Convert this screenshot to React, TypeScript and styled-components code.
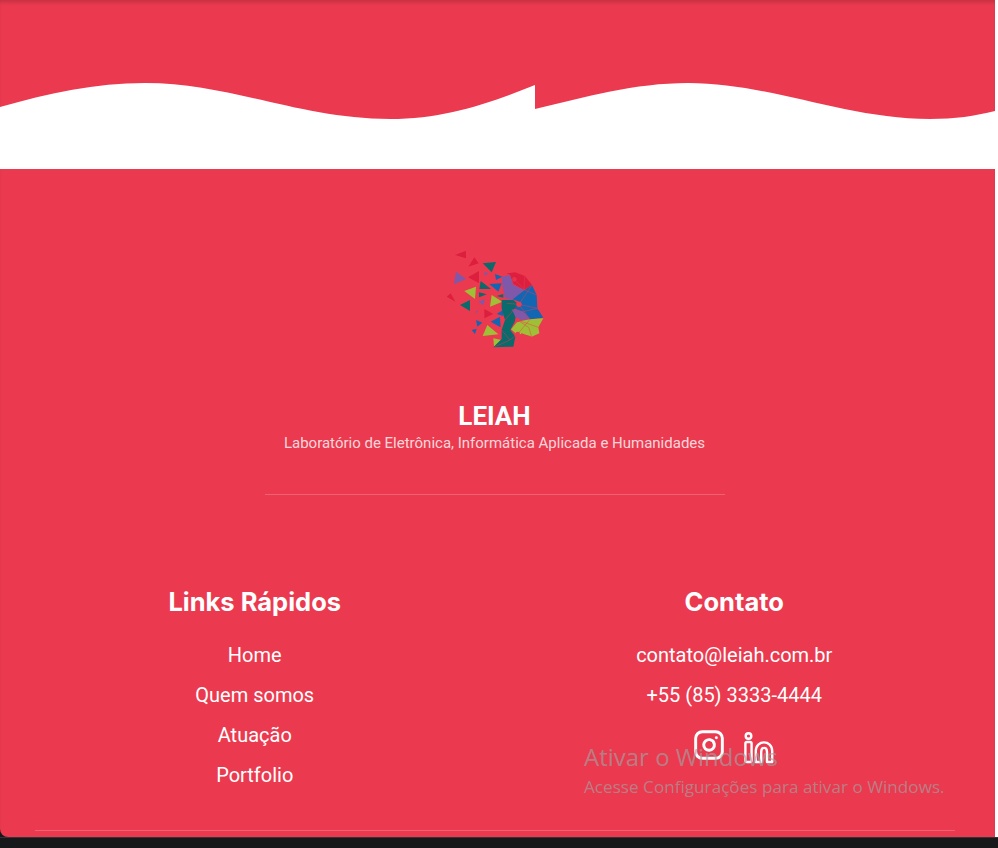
import React from "react";
import styled, { createGlobalStyle } from "styled-components";
import { Instagram } from "lucide-react";

const GlobalStyle = createGlobalStyle`
  html, body {
    margin: 0;
    padding: 0;
    height: 100%;
    overflow: hidden;
    background: #fff;
  }
  * { box-sizing: border-box; }
`;

const RED = "#eb3a4f";

const Page = styled.div`
  position: relative;
  width: 998px;
  height: 848px;
  display: flex;
  flex-direction: column;
  background: linear-gradient(#17181a, #17181a) left bottom / 20px 30px no-repeat, #fff;
  font-family: Roboto, "Liberation Sans", sans-serif;
  color: #fff;
`;

const Main = styled.main`
  width: 995px;
  height: 837px;
  background: ${RED};
  border-bottom-left-radius: 8px;
  box-shadow: inset 0 4px 4px -2px rgba(0, 0, 0, 0.18);
  overflow: hidden;
`;

const BottomBar = styled.div`
  height: 11px;
  background: #17181a;
  border-top: 1px solid #33343a;
`;

const WaveSvg = styled.svg`
  display: block;
  width: 995px;
  height: 169px;
`;

const Footer = styled.footer`
  display: flex;
  flex-direction: column;
  align-items: center;
  width: 989px;
  padding-top: 71px;
`;

const LogoSvg = styled.svg`
  display: block;
  width: 130px;
  height: 120px;
`;

const Title = styled.h2`
  margin: 41px 0 0;
  font-size: 26px;
  line-height: 30px;
  font-weight: 700;
`;

const Subtitle = styled.p`
  margin: 2px 0 0;
  height: 22px;
  font-size: 15px;
  line-height: 20px;
  font-weight: 400;
  color: rgba(255, 255, 255, 0.8);
`;

const Divider = styled.hr`
  width: 460px;
  height: 1px;
  margin: 39px 0 0;
  border: 0;
  background: rgba(255, 255, 255, 0.2);
`;

const Columns = styled.div`
  display: grid;
  grid-template-columns: 1fr 1fr;
  width: 959px;
  margin-top: 87px;
`;

const Column = styled.section`
  display: flex;
  flex-direction: column;
  align-items: center;
`;

const Heading = styled.h3`
  margin: 0 0 13px;
  font-family: Inter, "Open Sans", sans-serif;
  font-size: 25.5px;
  line-height: 40px;
  font-weight: 700;
`;

const LinkItem = styled.a`
  display: block;
  font-size: 20px;
  line-height: 40px;
  font-weight: 400;
  color: #fff;
  text-decoration: none;
`;

const Socials = styled.div`
  display: flex;
  align-items: flex-start;
  gap: 18px;
  margin-top: 14px;
  height: 36px;
`;

const InstagramIcon = styled(Instagram)`
  display: block;
  width: 32px;
  height: 32px;
  color: #fff;
`;

const LinkedinSvg = styled.svg`
  display: block;
  width: 32px;
  height: 36px;
`;

const BottomLine = styled.hr`
  width: 920px;
  height: 1px;
  margin: 35px 0 0;
  border: 0;
  background: rgba(255, 255, 255, 0.2);
`;

const Watermark = styled.div`
  position: absolute;
  left: 584px;
  top: 741px;
  font-family: "Open Sans", "Noto Sans", sans-serif;
  color: rgba(160, 160, 160, 0.68);
  pointer-events: none;
`;

const WatermarkTitle = styled.div`
  font-size: 24px;
  line-height: 32px;
`;

const WatermarkText = styled.div`
  font-size: 17.15px;
  line-height: 24px;
  margin-top: 2px;
`;

const C = {
  red: "#dc1f3e",
  purple: "#7f58a9",
  teal: "#0a6a6c",
  blue: "#1366b2",
  green: "#9fc036",
};

// coords are in 3x px, the logo svg scales them down
const shards: [string, string][] = [
  [C.red, "75,45 108,32 108,55"],
  [C.red, "115,80 133,52 146,70"],
  [C.teal, "158,70 198,66 185,97"],
  [C.purple, "72,133 78,95 108,117"],
  [C.red, "114,112 147,93 147,130"],
  [C.purple, "163,95 175,100 165,108"],
  [C.blue, "195,102 217,110 198,120"],
  [C.teal, "148,147 152,123 183,147"],
  [C.blue, "178,132 215,130 205,155"],
  [C.green, "103,153 138,140 135,177"],
  [C.teal, "147,157 170,163 147,172"],
  [C.teal, "200,168 220,162 220,173"],
  [C.red, "50,170 62,160 76,185"],
  [C.purple, "145,185 165,178 160,195"],
  [C.green, "180,200 185,165 217,185"],
  [C.teal, "90,195 120,180 120,213"],
  [C.purple, "135,215 145,212 140,220"],
  [C.red, "163,207 190,222 163,235"],
  [C.blue, "200,222 222,208 220,228"],
  [C.blue, "138,240 157,248 142,260"],
  [C.blue, "182,245 210,230 212,262"],
  [C.blue, "125,270 140,266 135,282"],
  [C.green, "158,288 172,255 205,283"],
  [C.green, "190,295 215,300 192,320"],
  // head
  [C.red, "230,100 255,97 285,108 306,135 282,150 250,132 240,105"],
  [C.purple, "215,110 240,105 250,135 284,150 247,180 225,175 218,140"],
  [C.blue, "306,135 320,165 322,205 340,233 300,238 280,215 250,205 272,187 248,178 284,150"],
  [C.teal, "215,180 250,180 264,192 250,210 258,238 241,270 256,290 250,320 190,322 215,297 215,270 225,240 215,205"],
  [C.purple, "245,208 280,215 300,238 262,240"],
  [C.green, "340,235 325,262 328,280 305,290 275,280 265,287 243,268 262,245 300,238"],
];

const Logo = () => (
  <LogoSvg viewBox="0 0 390 360">
    {shards.map(([fill, points], i) => (
      <polygon key={i} fill={fill} points={points} />
    ))}
    <path
      stroke={RED}
      strokeWidth="1.6"
      fill="none"
      opacity="0.85"
      d="M267 193 L306 135 M267 193 L322 205 M267 193 L300 238 M262 240 L325 262 M263 282 L300 238 M263 282 L305 290 M253 118 L284 150 M240 300 L263 282 M240 300 L195 320 M230 190 L267 193 M284 150 L320 165 M280 215 L322 205 M296 262 L305 290 M296 262 L262 240 M284 108 L282 150 M240 300 L215 270 M250 210 L225 240"
    />
    <circle cx="267" cy="193" r="8" fill={RED} />
    <circle cx="262" cy="240" r="7" fill={RED} />
    <circle cx="263" cy="282" r="7" fill={RED} />
    <circle cx="253" cy="118" r="7" fill={RED} opacity="0.7" />
  </LogoSvg>
);

const LinkedinIcon = () => (
  <LinkedinSvg viewBox="0 0 32 36" fill="none" stroke="#fff" strokeWidth="2.4" strokeLinejoin="round" strokeLinecap="round">
    <circle cx="5.5" cy="7" r="2.8" />
    <rect x="2.4" y="13" width="6.2" height="20" rx="1.6" />
    <path d="M12.8 33 V22 C12.8 10.5 29.2 10.5 29.2 22 V33 H24 V23 C24 17.5 18.2 17.5 18.2 23 V33 Z" />
  </LinkedinSvg>
);

export default function App() {
  return (
    <>
      <GlobalStyle />
      <Page>
        <Main>
          <WaveSvg viewBox="0 0 995 169">
            <path
              fill="#fff"
              d="M0 107 C50 93 95 83 145 83 C230 83 300 119 390 119 C445 119 490 103 535 85 L535 109 C585 97 635 83 688 83 C770 83 845 119 930 119 C955 119 975 116 995 111 L995 169 L0 169 Z"
            />
          </WaveSvg>
          <Footer>
            <Logo />
            <Title>LEIAH</Title>
            <Subtitle>Laboratório de Eletrônica, Informática Aplicada e Humanidades</Subtitle>
            <Divider />
            <Columns>
              <Column>
                <Heading>Links Rápidos</Heading>
                <LinkItem href="#">Home</LinkItem>
                <LinkItem href="#">Quem somos</LinkItem>
                <LinkItem href="#">Atuação</LinkItem>
                <LinkItem href="#">Portfolio</LinkItem>
              </Column>
              <Column>
                <Heading>Contato</Heading>
                <LinkItem href="#">contato@leiah.com.br</LinkItem>
                <LinkItem href="#">+55 (85) 3333-4444</LinkItem>
                <Socials>
                  <InstagramIcon strokeWidth={2.2} />
                  <LinkedinIcon />
                </Socials>
              </Column>
            </Columns>
            <BottomLine />
          </Footer>
        </Main>
        <BottomBar />
        <Watermark>
          <WatermarkTitle>Ativar o Windows</WatermarkTitle>
          <WatermarkText>Acesse Configurações para ativar o Windows.</WatermarkText>
        </Watermark>
      </Page>
    </>
  );
}
